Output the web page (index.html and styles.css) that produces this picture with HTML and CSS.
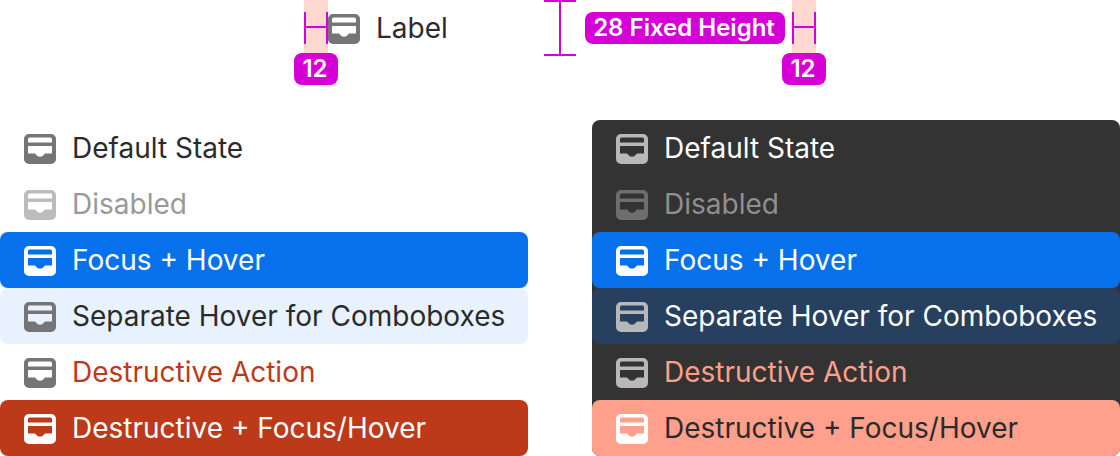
FILE: index.html
```html
<!DOCTYPE html>
<html lang="en">
<head>
    <meta charset="UTF-8">
    <meta name="viewport" content="width=device-width, initial-scale=1.0">
    <title>Menu Item Spec</title>
    <link rel="stylesheet" href="styles.css">
</head>
<body>
    <svg class="defs" width="0" height="0">
        <symbol id="tray" viewBox="0 0 32 30">
            <path fill-rule="evenodd" d="M5 0H27A5 5 0 0 1 32 5V25A5 5 0 0 1 27 30H5A5 5 0 0 1 0 25V5A5 5 0 0 1 5 0ZM5.5 3.5A1.5 1.5 0 0 0 4 5V8.5H28V5A1.5 1.5 0 0 0 26.5 3.5ZM4 12V19.5H11L13.5 22Q14 22.5 15 22.5H17Q18 22.5 18.5 22L21 19.5H28V12Z"/>
        </symbol>
    </svg>

    <!-- redlines for the row -->
    <div class="spec">
        <div class="strip strip-left"></div>
        <div class="strip strip-right"></div>
        <div class="gap-mark gap-mark-left"></div>
        <div class="gap-mark gap-mark-right"></div>
        <span class="badge badge-left">12</span>
        <span class="badge badge-right">12</span>
        <span class="badge badge-height">28 Fixed Height</span>
        <div class="height-mark"></div>
        <div class="spec-row">
            <svg class="icon"><use href="#tray"/></svg>
            <span>Label</span>
        </div>
    </div>

    <div class="menus">
        <ul class="menu">
            <li class="item"><svg class="icon"><use href="#tray"/></svg>Default State</li>
            <li class="item disabled"><svg class="icon"><use href="#tray"/></svg>Disabled</li>
            <li class="item focus"><svg class="icon"><use href="#tray"/></svg>Focus + Hover</li>
            <li class="item hover"><svg class="icon"><use href="#tray"/></svg>Separate Hover for Comboboxes</li>
            <li class="item danger"><svg class="icon"><use href="#tray"/></svg>Destructive Action</li>
            <li class="item danger-focus"><svg class="icon"><use href="#tray"/></svg>Destructive + Focus/Hover</li>
        </ul>
        <ul class="menu dark">
            <li class="item"><svg class="icon"><use href="#tray"/></svg>Default State</li>
            <li class="item disabled"><svg class="icon"><use href="#tray"/></svg>Disabled</li>
            <li class="item focus"><svg class="icon"><use href="#tray"/></svg>Focus + Hover</li>
            <li class="item hover"><svg class="icon"><use href="#tray"/></svg>Separate Hover for Comboboxes</li>
            <li class="item danger"><svg class="icon"><use href="#tray"/></svg>Destructive Action</li>
            <li class="item danger-focus"><svg class="icon"><use href="#tray"/></svg>Destructive + Focus/Hover</li>
        </ul>
    </div>
</body>
</html>
```

FILE: styles.css
```css
* { margin: 0; padding: 0; box-sizing: border-box; }
body { font-family: Inter, "Liberation Sans", sans-serif; font-size: 28px; line-height: 52px; color: #2b2b2b; background: #fff; overflow: hidden; font-optical-sizing: none; }
.defs { position: absolute; }

.icon { width: 32px; height: 30px; flex: none; margin-top: 2px; fill: #757575; }

/* redlines */
.spec { position: relative; height: 120px; }
.spec-row { display: flex; align-items: center; gap: 16px; height: 56px; padding-left: 328px; }
.strip { position: absolute; top: 0; width: 24px; height: 54px; background: #ffd9d0; }
.strip-left { left: 304px; }
.strip-right { left: 792px; }
.gap-mark { position: absolute; top: 12px; width: 24px; height: 32px; border-left: 2px solid #d500d5; border-right: 2px solid #d500d5; }
.gap-mark::after { content: ""; position: absolute; left: 0; right: 0; top: 14px; height: 2px; background: #d500d5; }
.gap-mark-left { left: 304px; }
.gap-mark-right { left: 792px; }
.badge { position: absolute; display: flex; align-items: center; justify-content: center; height: 32px; padding-right: 2px; border-radius: 8px; background: #d500d5; color: #fff; font-size: 24px; font-weight: 600; line-height: 32px; }
.badge-left { left: 294px; top: 53px; width: 44px; }
.badge-right { left: 782px; top: 53px; width: 44px; }
.badge-height { left: 585px; top: 12px; width: 200px; }
.height-mark { position: absolute; left: 544px; top: 0; width: 32px; height: 56px; border-top: 2px solid #d500d5; border-bottom: 2px solid #d500d5; }
.height-mark::after { content: ""; position: absolute; left: 15px; top: 0; bottom: 0; width: 2px; background: #d500d5; }

/* menus */
.menus { display: flex; justify-content: space-between; }
.menu { width: 528px; list-style: none; border-radius: 8px; }
.item { display: flex; align-items: center; gap: 16px; height: 56px; padding-left: 24px; border-radius: 8px; white-space: nowrap; }

.disabled { color: #999; }
.disabled .icon { fill: #bcbcbc; }
.focus { background: #0771ec; color: #fff; }
.focus .icon { fill: #fff; }
.hover { background: #e8f2fe; }
.danger { color: #bc3a1a; }
.danger-focus { background: #bc3a1a; color: #fff; }
.danger-focus .icon { fill: #fff; }

.dark { background: #333; color: #fff; }
.dark .icon { fill: #b8b8b8; }
.dark .disabled { color: #8f8f8f; }
.dark .disabled .icon { fill: #6e6e6e; }
.dark .focus .icon { fill: #fff; }
.dark .hover { background: #27405f; }
.dark .danger { color: #ff9f8a; }
.dark .danger-focus { background: #ffa08c; color: #2b2b2b; }
.dark .danger-focus .icon { fill: #fff; }
```
